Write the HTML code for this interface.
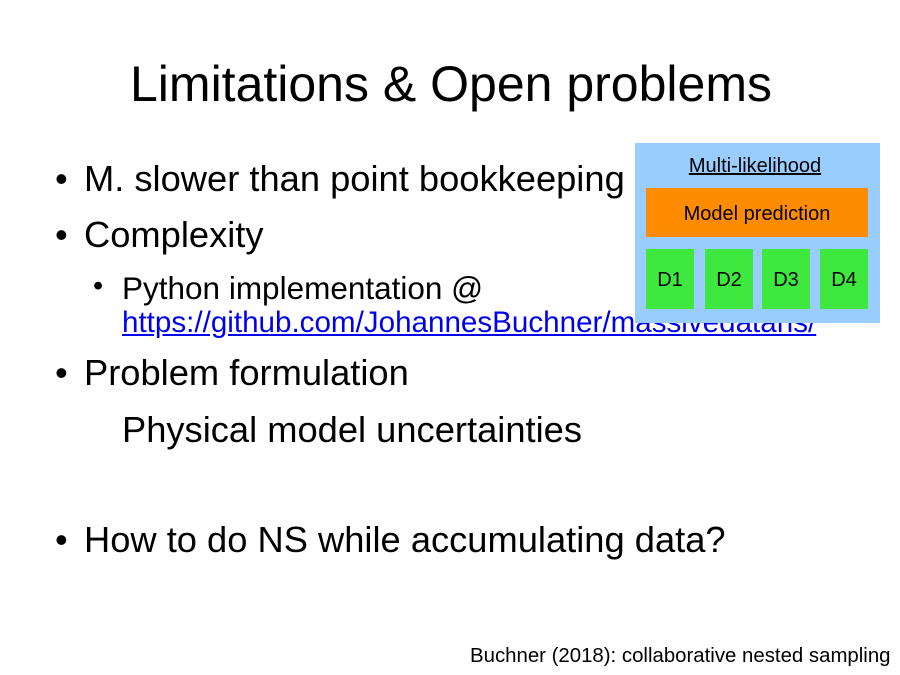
<!DOCTYPE html>
<html><head><style>
body{margin:0;width:900px;height:675px;background:#fff;position:relative;overflow:hidden;font-family:"Liberation Sans",sans-serif;color:#000}
.a{position:absolute;white-space:nowrap}
.b{font-size:36.3px}
.s{font-size:31.5px}
a{color:#00e;text-decoration:underline}
.box{position:absolute}
.g{position:absolute;top:249px;width:48px;height:60px;background:#3ee83e;font-size:20px;line-height:62px;text-align:center}
</style></head><body>
<div class="a" style="left:130px;top:55px;font-size:50px">Limitations &amp; Open problems</div>
<div class="a b" style="left:55px;top:158px">•</div><div class="a b" style="left:84px;top:158px">M. slower than point bookkeeping</div>
<div class="a b" style="left:55px;top:214px">•</div><div class="a b" style="left:84px;top:214px">Complexity</div>
<div class="a s" style="left:93px;top:270px;font-size:29px">•</div><div class="a s" style="left:122px;top:270px">Python implementation @</div>
<div class="a" style="left:122px;top:306px;font-size:29.6px"><a>https://github.com/JohannesBuchner/massivedatans/</a></div>
<div class="a b" style="left:55px;top:352px">•</div><div class="a b" style="left:84px;top:352px">Problem formulation</div>
<div class="a b" style="left:122px;top:409px">Physical model uncertainties</div>
<div class="a b" style="left:55px;top:519px">•</div><div class="a b" style="left:84px;top:519px">How to do NS while accumulating data?</div>
<div class="a" style="left:470px;top:645px;font-size:20.4px">Buchner (2018): collaborative nested sampling</div>
<div class="box" style="left:635px;top:143px;width:245px;height:180px;background:#99ccff"></div>
<div class="a" style="left:635px;top:155px;width:240px;text-align:center;font-size:20px;text-decoration:underline">Multi-likelihood</div>
<div class="box" style="left:646px;top:188px;width:222px;height:49px;background:#ff8c00;font-size:20px;line-height:52px;text-align:center">Model prediction</div>
<div class="g" style="left:646px">D1</div>
<div class="g" style="left:705px">D2</div>
<div class="g" style="left:762px">D3</div>
<div class="g" style="left:820px">D4</div>
</body></html>
